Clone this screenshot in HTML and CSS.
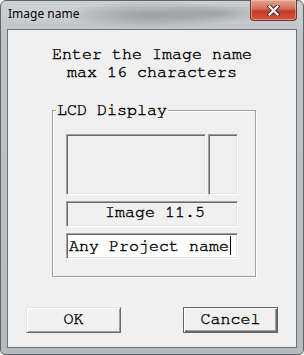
FILE: index.html
```html
<!DOCTYPE html>
<html lang="en">
<head>
    <meta charset="UTF-8">
    <title>Image name</title>
    <link rel="stylesheet" href="styles.css">
</head>
<body>

<div class="window">
    <div class="titlebar">
        <span class="title">Image name</span>
        <button class="close" type="button" aria-label="Close">
            <svg width="13" height="11" viewBox="0 0 13 11">
                <path d="M2.5 1.5 L10.5 9.5 M10.5 1.5 L2.5 9.5" stroke="#4a2520" stroke-width="4" stroke-linecap="square"/>
                <path d="M2.5 1.5 L10.5 9.5 M10.5 1.5 L2.5 9.5" stroke="#fff" stroke-width="2.2" stroke-linecap="square"/>
            </svg>
        </button>
    </div>

    <div class="dialog">
        <div class="prompt">
            Enter the Image name<br>
            max 16 characters
        </div>

        <div class="group">
            <span class="group-label">LCD Display</span>
            <div class="screen-row">
                <div class="sunken screen"></div>
                <div class="sunken screen-side"></div>
            </div>
            <div class="sunken status">Image 11.5</div>
            <div class="sunken name-input">Any Project name<span class="caret"></span></div>
        </div>

        <div class="buttons">
            <button class="btn" type="button">OK</button>
            <button class="btn btn-default" type="button">Cancel</button>
        </div>
    </div>
</div>

</body>
</html>
```

FILE: styles.css
```css
body {
    margin: 0;
    background-color: #fff;
}
.window {
    width: 304px;
    height: 355px;
    box-sizing: border-box;
    border: 1px solid #5f6468;
    border-radius: 6px 6px 5px 5px;
    padding: 0 6px 6px;
    display: flex;
    flex-direction: column;
    background:
        radial-gradient(ellipse 90px 14px at 150px 14px, rgba(110, 110, 110, 0.5), rgba(110, 110, 110, 0)),
        radial-gradient(ellipse 60px 10px at 215px 12px, rgba(130, 130, 130, 0.45), rgba(130, 130, 130, 0)),
        linear-gradient(#cdd0d2, #bfc3c6 40px, #b6babd);
}
.titlebar {
    height: 28px;
    display: flex;
    justify-content: space-between;
    align-items: flex-start;
}
.title {
    font-family: "Noto Sans", sans-serif;
    font-size: 12px;
    line-height: 16px;
    padding: 5px 0 0 1px;
    color: #000;
    text-shadow: 0 0 6px #e8e8e8;
}
.close {
    width: 47px;
    height: 21px;
    margin-top: -1px;
    padding: 0;
    border: 1px solid #6a3b34;
    border-top: none;
    border-radius: 0 0 4px 4px;
    background: linear-gradient(#e6a493, #d26d58 45%, #c23a25 55%, #d5563d);
    box-shadow: inset 0 0 0 1px rgba(255, 210, 200, 0.45);
    display: flex;
    justify-content: center;
    align-items: center;
}
.dialog {
    flex: 1;
    border: 1px solid #727272;
    background-color: #f0f0f0;
    display: flex;
    flex-direction: column;
    font-family: "Nimbus Mono PS", "Nimbus Mono L", "FreeMono", "Courier New", "Liberation Mono", monospace;
    font-size: 16.67px;
    color: #000;
    -webkit-text-stroke: 0.4px #000;
}
.prompt {
    margin-top: 15px;
    text-align: center;
    line-height: 18px;
}
.group {
    margin: 29px 40px 0 44px;
    padding: 0 17px 17px 13px;
    border: 1px solid #a0a0a0;
    box-shadow: 1px 1px 0 #fff, inset 1px 1px 0 #fff;
    display: flex;
    flex-direction: column;
}
.group-label {
    align-self: flex-start;
    margin: -10px 0 0 -10px;
    padding: 0 1px;
    line-height: 18px;
    background-color: #f0f0f0;
}
.sunken {
    box-sizing: border-box;
    border: 1px solid;
    border-color: #a0a0a0 #fff #fff #a0a0a0;
    box-shadow: inset 1px 1px 0 #696969, inset -1px -1px 0 #e3e3e3;
    background-color: #f0f0f0;
}
.screen-row {
    display: flex;
    gap: 2px;
    height: 61px;
    margin-top: 15px;
}
.screen {
    flex: 1;
}
.screen-side {
    width: 30px;
}
.status {
    margin-top: 6px;
    height: 26px;
    padding-left: 38px;
    line-height: 20px;
    overflow: hidden;
    white-space: nowrap;
}
.name-input {
    margin-top: 6px;
    height: 26px;
    padding-left: 2px;
    line-height: 24px;
    background-color: #fff;
    white-space: nowrap;
}
.caret {
    display: inline-block;
    width: 1px;
    height: 19px;
    margin-left: 1px;
    background-color: #000;
    vertical-align: -4px;
}
.buttons {
    margin-top: 30px;
    padding: 0 18px;
    display: flex;
    justify-content: space-between;
}
.btn {
    width: 95px;
    height: 26px;
    padding: 0 0 2px;
    font-family: inherit;
    font-size: inherit;
    line-height: 22px;
    color: #000;
    background-color: #f0f0f0;
    border: 1px solid;
    border-color: #e3e3e3 #696969 #696969 #e3e3e3;
    box-shadow: inset 1px 1px 0 #fff, inset -1px -1px 0 #a0a0a0;
}
.btn-default {
    border-color: #646464;
    box-shadow: inset 1px 1px 0 #fff, inset -1px -1px 0 #696969, inset -2px -2px 0 #a0a0a0;
}
```
